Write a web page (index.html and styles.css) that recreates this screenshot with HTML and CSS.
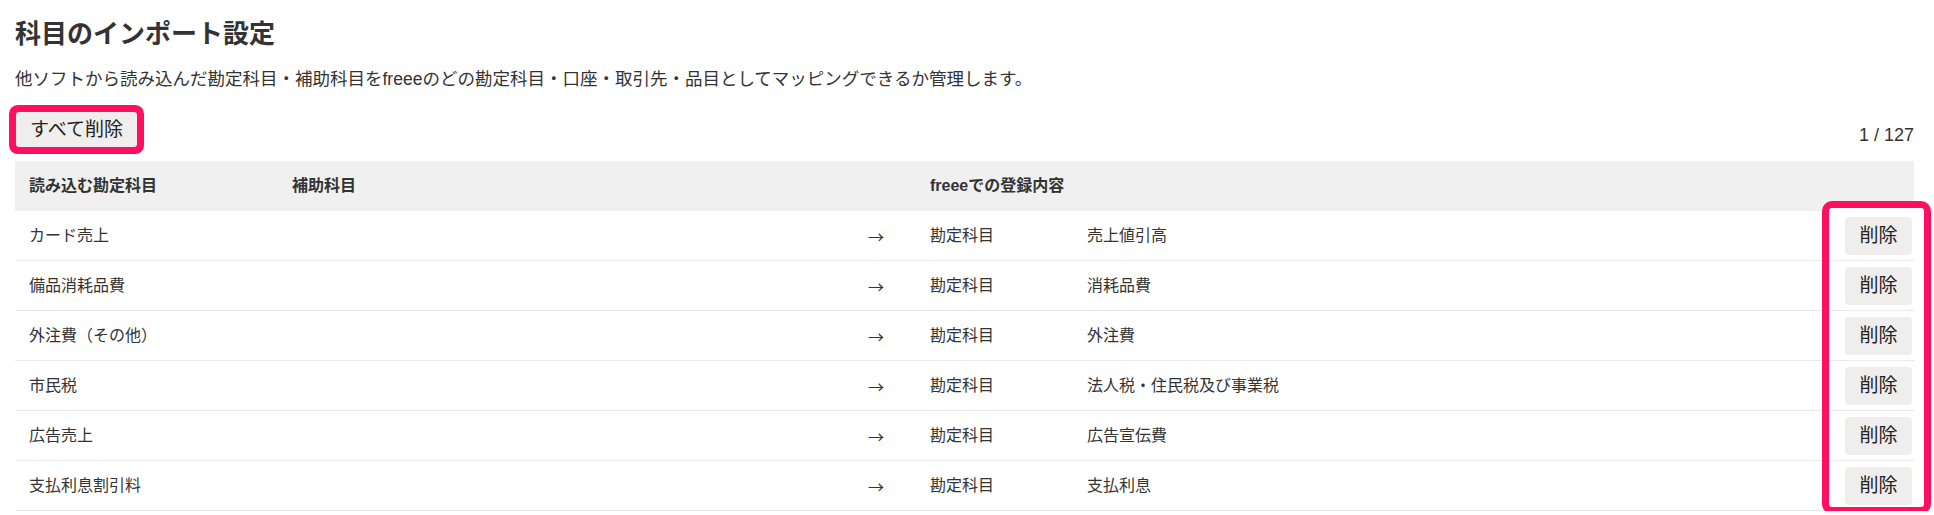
FILE: index.html
```html
<!DOCTYPE html>
<html lang="ja">
<head>
<meta charset="utf-8">
<title>科目のインポート設定</title>
<link rel="stylesheet" href="styles.css">
</head>
<body>
<div class="page">
  <h1 class="title">科目のインポート設定</h1>
  <p class="desc">他ソフトから読み込んだ勘定科目・補助科目をfreeeのどの勘定科目・口座・取引先・品目としてマッピングできるか管理します。</p>
  <div class="toolbar">
    <button class="btn btn-all" type="button">すべて削除</button>
    <span class="count">1 / 127</span>
  </div>
  <div class="table">
    <div class="row head">
      <div class="cell">読み込む勘定科目</div>
      <div class="cell">補助科目</div>
      <div class="cell"></div>
      <div class="cell span2">freeeでの登録内容</div>
      <div class="cell"></div>
    </div>
    <div class="row">
      <div class="cell">カード売上</div>
      <div class="cell"></div>
      <div class="cell arrow">→</div>
      <div class="cell">勘定科目</div>
      <div class="cell">売上値引高</div>
      <div class="cell action"><button class="btn btn-del" type="button">削除</button></div>
    </div>
    <div class="row">
      <div class="cell">備品消耗品費</div>
      <div class="cell"></div>
      <div class="cell arrow">→</div>
      <div class="cell">勘定科目</div>
      <div class="cell">消耗品費</div>
      <div class="cell action"><button class="btn btn-del" type="button">削除</button></div>
    </div>
    <div class="row">
      <div class="cell">外注費（その他）</div>
      <div class="cell"></div>
      <div class="cell arrow">→</div>
      <div class="cell">勘定科目</div>
      <div class="cell">外注費</div>
      <div class="cell action"><button class="btn btn-del" type="button">削除</button></div>
    </div>
    <div class="row">
      <div class="cell">市民税</div>
      <div class="cell"></div>
      <div class="cell arrow">→</div>
      <div class="cell">勘定科目</div>
      <div class="cell">法人税・住民税及び事業税</div>
      <div class="cell action"><button class="btn btn-del" type="button">削除</button></div>
    </div>
    <div class="row">
      <div class="cell">広告売上</div>
      <div class="cell"></div>
      <div class="cell arrow">→</div>
      <div class="cell">勘定科目</div>
      <div class="cell">広告宣伝費</div>
      <div class="cell action"><button class="btn btn-del" type="button">削除</button></div>
    </div>
    <div class="row">
      <div class="cell">支払利息割引料</div>
      <div class="cell"></div>
      <div class="cell arrow">→</div>
      <div class="cell">勘定科目</div>
      <div class="cell">支払利息</div>
      <div class="cell action"><button class="btn btn-del" type="button">削除</button></div>
    </div>
    <div class="highlight"></div>
  </div>
</div>
</body>
</html>
```

FILE: styles.css
```css
html, body {
  margin: 0;
  padding: 0;
  background: #ffffff;
  overflow: hidden;
}

body {
  font-family: "Liberation Sans", "Noto Sans CJK JP", sans-serif;
  color: #333333;
}

.page {
  padding: 0 20px 0 15px;
}

.title {
  margin: 16px 0 0;
  font-size: 26px;
  line-height: 36px;
  font-weight: bold;
  color: #333333;
}

.desc {
  margin: 15px 0 0;
  font-size: 17.5px;
  line-height: 25px;
  color: #333333;
}

.toolbar {
  display: flex;
  justify-content: space-between;
  align-items: flex-end;
  margin: 20px 0 14px;
  padding-left: 1px;
}

.btn {
  font-family: "Liberation Sans", "Noto Sans CJK JP", sans-serif;
  font-size: 19px;
  color: #222222;
  background: #efeeed;
  border: 0;
  padding: 0 14px;
  margin: 0;
  cursor: pointer;
}

.btn-all {
  height: 35px;
  line-height: 35px;
  padding: 0 14px;
  border-radius: 3px;
  box-shadow: 0 0 0 7px #ff0f5f;
}

.btn-del {
  height: 38px;
  line-height: 38px;
  border-radius: 4px;
  width: 67px;
  padding: 0;
}

.count {
  font-size: 18px;
  line-height: 24px;
  color: #333333;
}

.table {
  position: relative;
  font-size: 16px;
}

.row {
  display: grid;
  grid-template-columns: 263px 577px 61px 157px 1fr 100px;
  align-items: center;
  height: 50px;
  box-sizing: border-box;
  border-bottom: 1px solid #eaeaea;
  line-height: 24px;
}

.row.head {
  background: #f0f0f0;
  border-bottom: 0;
  font-weight: bold;
}

.cell {
  padding-left: 14px;
  white-space: nowrap;
}

.span2 {
  grid-column: span 2;
}

.arrow {
  font-family: "Noto Sans CJK JP", sans-serif;
  font-size: 16px;
  color: #333333;
  padding-left: 13px;
}

.action {
  display: flex;
  justify-content: flex-end;
  padding-left: 0;
  padding-right: 2px;
}

.highlight {
  position: absolute;
  top: 40px;
  right: -17px;
  width: 109px;
  height: 313px;
  box-sizing: border-box;
  border: 7px solid #ff0f5f;
  border-radius: 10px;
  background: linear-gradient(#ffffff 0 3px, transparent 3px);
  pointer-events: none;
}
```
